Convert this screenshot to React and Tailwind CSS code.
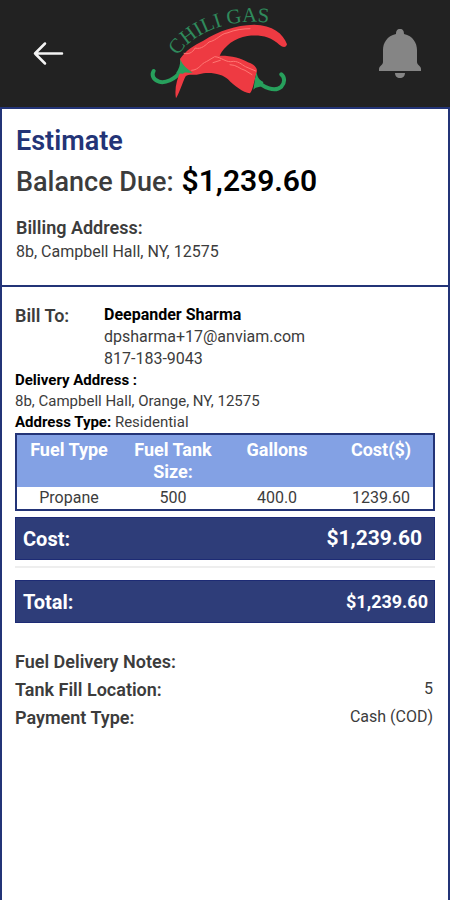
const fuelRows = [{ type: 'Propane', size: '500', gallons: '400.0', cost: '1239.60' }];

function Logo() {
  return (
    <svg viewBox="0 0 480 321" className="h-[107px] w-40" role="img" aria-label="Chili Gas">
      <path d="M124 213C105 238 75 251 57 245C39 239 34 224 41 213" fill="none" stroke="#27a05c" strokeWidth="12" strokeLinecap="round" />
      <path d="M350 239C370 264 405 277 424 260C436 247 434 231 424 223" fill="none" stroke="#27a05c" strokeWidth="12" strokeLinecap="round" />
      <path d="M120 177C137 151 163 135 190 122C240 91 285 76 342 74C398 75 430 101 441 133C439 142 430 144 419 135C390 108 358 104 322 108C285 113 253 138 239 167C269 166 306 174 324 187C343 194 354 204 350 218C344 234 340 269 330 280C309 278 282 257 264 238C247 220 204 214 177 223C163 227 145 221 137 229C128 246 119 278 108 295C103 272 109 237 124 211Z" fill="#ee3a42" />
      <path d="M132 160C151 166 163 150 165 144C184 150 199 133 207 126C231 121 244 100 261 99C285 89 311 86 330 86M155 211C178 210 183 190 199 185L224 170C244 171 259 190 280 184C299 184 309 198 321 202L347 213M270 194C290 194 299 207 315 211L336 224M219 188L241 181" fill="none" stroke="#ff7773" strokeWidth="3" strokeLinecap="round" strokeLinejoin="round" />
      <path d="M121 178C127 195 141 207 158 218C144 219 134 214 129 221L108 220C117 207 121 195 121 178ZM350 216C346 229 343 251 340 269C349 260 355 263 367 258L370 246C355 238 352 230 350 216Z" fill="#27a05c" />
      <path id="logo-arc" d="M113 168C155 102 275 40 430 76" fill="none" />
      <text fill="#2f8a5c" className="font-['Liberation_Serif',serif] text-[62px]">
        <textPath href="#logo-arc">CHILI GAS</textPath>
      </text>
    </svg>
  );
}

function Header() {
  return (
    <header className="flex h-[107px] shrink-0 items-center justify-between bg-[#222] px-7">
      <button type="button" aria-label="Back" className="flex h-10 w-10 items-center justify-center">
        <svg viewBox="0 0 40 40" className="h-10 w-10" fill="none" stroke="#f4f4f4" strokeWidth="2.5" strokeLinecap="round" strokeLinejoin="round">
          <path d="M34 19.500H7M17 9.500L7 19.500L17 29.500" />
        </svg>
      </button>
      <div className="flex flex-1 justify-center pr-1.5">
        <Logo />
      </div>
      <button type="button" aria-label="Notifications">
        <svg viewBox="0 0 44 50" className="h-[50px] w-11" fill="#858585">
          <path d="M22 0c-3 0-4 2-4 5C9 7 5 14 5 21v12c0 3-4 4-4 7v2h42v-2c0-3-4-4-4-7V21c0-7-4-14-13-16 0-3-1-5-4-5ZM17 44h10c0 3-2 5-5 5s-5-2-5-5Z" />
        </svg>
      </button>
    </header>
  );
}

function AmountBar({ label, amount, amountClass }) {
  return (
    <div className="flex h-[43px] items-center justify-between border border-[#1d2b75] bg-[#2e3d79] pl-[7px] text-xl font-bold text-white">
      <span>{label}</span>
      <span className={amountClass}>{amount}</span>
    </div>
  );
}

function NoteRow({ label, value }) {
  return (
    <div className="flex h-7 items-center justify-between pr-[2px]">
      <dt className="text-lg font-semibold">{label}</dt>
      <dd className="pb-[2px] text-base">{value}</dd>
    </div>
  );
}

export default function App() {
  return (
    <div className="flex min-h-screen flex-col bg-white font-[Roboto,sans-serif] text-[#3c3c3c]">
      <Header />
      <main className="flex-1 border-2 border-b-0 border-[#233477]">
        <section className="border-b-2 border-[#233477] px-[14px] pt-4 pb-[21px]">
          <h1 className="text-[27px] leading-8 font-semibold text-[#233477]">Estimate</h1>
          <p className="flex items-baseline gap-2 text-[27px] leading-[48px] font-medium">
            <span>Balance Due:</span>
            <span className="text-[30px] font-semibold text-black">$1,239.60</span>
          </p>
          <h2 className="mt-[10px] text-lg leading-6 font-semibold">Billing Address:</h2>
          <p className="text-base">8b, Campbell Hall, NY, 12575</p>
        </section>

        <section className="px-[13px] pt-[17px]">
          <div className="flex leading-[22px]">
            <h2 className="w-[89px] text-lg leading-6 font-semibold">Bill To:</h2>
            <div className="text-base leading-[22px]">
              <p className="font-bold text-black">Deepander Sharma</p>
              <p>dpsharma+17@anviam.com</p>
              <p>817-183-9043</p>
            </div>
          </div>
          <h3 className="text-[15px] leading-[21px] font-bold text-black">Delivery Address :</h3>
          <p className="text-[15px] leading-[21px]">8b, Campbell Hall, Orange, NY, 12575</p>
          <p className="text-[15px] leading-[21px]">
            <strong className="font-bold text-black">Address Type:</strong> Residential
          </p>

          <table className="w-full table-fixed border-separate border-spacing-0 border-2 border-[#233477] text-center">
            <thead>
              <tr className="h-[52px] bg-[#83a1e4] align-top text-lg leading-[22px] text-white">
                <th className="px-2 pt-1">Fuel Type</th>
                <th className="px-2 pt-1">Fuel Tank Size:</th>
                <th className="px-2 pt-1">Gallons</th>
                <th className="px-2 pt-1">Cost($)</th>
              </tr>
            </thead>
            <tbody>
              {fuelRows.map((row) => (
                <tr key={row.type} className="h-[22px] text-base leading-[22px]">
                  <td>{row.type}</td>
                  <td>{row.size}</td>
                  <td>{row.gallons}</td>
                  <td>{row.cost}</td>
                </tr>
              ))}
            </tbody>
          </table>

          <div className="mt-[6px] border-b-2 border-[#eee] pb-[6px]">
            <AmountBar label="Cost:" amount="$1,239.60" amountClass="pr-3 text-[21px]" />
          </div>
          <div className="mt-3">
            <AmountBar label="Total:" amount="$1,239.60" amountClass="pr-[6px] text-lg" />
          </div>

          <dl className="mt-[25px]">
            <NoteRow label="Fuel Delivery Notes:" />
            <NoteRow label="Tank Fill Location:" value="5" />
            <NoteRow label="Payment Type:" value="Cash (COD)" />
          </dl>
        </section>
      </main>
    </div>
  );
}
